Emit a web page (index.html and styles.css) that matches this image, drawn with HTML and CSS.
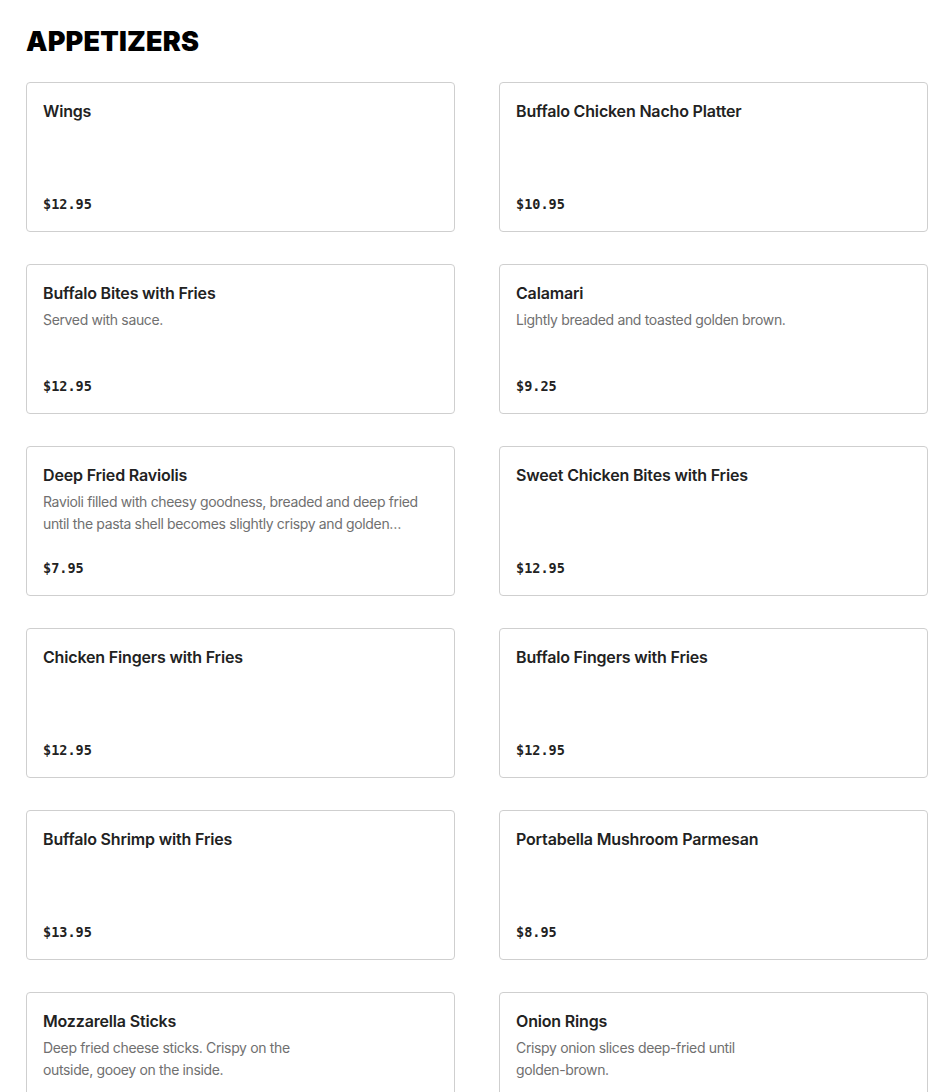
FILE: index.html
```html
<!DOCTYPE html>
<html lang="en">
<head>
    <meta charset="UTF-8">
    <meta name="viewport" content="width=device-width, initial-scale=1.0">
    <title>Menu - Appetizers</title>
    <link rel="stylesheet" href="styles.css">
</head>
<body>
    <section class="menu-section">
        <h2 class="section-title">APPETIZERS</h2>

        <div class="menu-grid">
            <div class="menu-item">
                <h3 class="item-name">Wings</h3>
                <div class="item-price">$12.95</div>
            </div>
            <div class="menu-item">
                <h3 class="item-name">Buffalo Chicken Nacho Platter</h3>
                <div class="item-price">$10.95</div>
            </div>

            <div class="menu-item">
                <h3 class="item-name">Buffalo Bites with Fries</h3>
                <p class="item-desc">Served with sauce.</p>
                <div class="item-price">$12.95</div>
            </div>
            <div class="menu-item">
                <h3 class="item-name">Calamari</h3>
                <p class="item-desc">Lightly breaded and toasted golden brown.</p>
                <div class="item-price">$9.25</div>
            </div>

            <div class="menu-item">
                <h3 class="item-name">Deep Fried Raviolis</h3>
                <p class="item-desc">Ravioli filled with cheesy goodness, breaded and deep fried until the pasta shell becomes slightly crispy and golden brown. Served with marinara sauce.</p>
                <div class="item-price">$7.95</div>
            </div>
            <div class="menu-item">
                <h3 class="item-name">Sweet Chicken Bites with Fries</h3>
                <div class="item-price">$12.95</div>
            </div>

            <div class="menu-item">
                <h3 class="item-name">Chicken Fingers with Fries</h3>
                <div class="item-price">$12.95</div>
            </div>
            <div class="menu-item">
                <h3 class="item-name">Buffalo Fingers with Fries</h3>
                <div class="item-price">$12.95</div>
            </div>

            <div class="menu-item">
                <h3 class="item-name">Buffalo Shrimp with Fries</h3>
                <div class="item-price">$13.95</div>
            </div>
            <div class="menu-item">
                <h3 class="item-name">Portabella Mushroom Parmesan</h3>
                <div class="item-price">$8.95</div>
            </div>

            <div class="menu-item">
                <h3 class="item-name">Mozzarella Sticks</h3>
                <p class="item-desc narrow">Deep fried cheese sticks. Crispy on the outside, gooey on the inside.</p>
                <div class="item-price">$8.95</div>
            </div>
            <div class="menu-item">
                <h3 class="item-name">Onion Rings</h3>
                <p class="item-desc narrow">Crispy onion slices deep-fried until golden-brown.</p>
                <div class="item-price">$7.95</div>
            </div>
        </div>
    </section>
</body>
</html>
```

FILE: styles.css
```css
body {
    font-family: 'Inter', 'Liberation Sans', sans-serif;
    background: #fff;
    color: #1f1f1f;
    margin: 0;
    padding: 26px 22px 40px 26px;
}
.section-title {
    font-family: 'Inter', 'Liberation Sans', sans-serif;
    font-weight: 900;
    font-size: 27px;
    letter-spacing: 0.2px;
    line-height: 32px;
    color: #000;
    margin: 0 0 24px 0;
}
.menu-grid {
    display: grid;
    grid-template-columns: 1fr 1fr;
    column-gap: 44px;
    row-gap: 32px;
}
.menu-item {
    display: flex;
    flex-direction: column;
    height: 150px;
    box-sizing: border-box;
    padding: 16px;
    border: 1px solid #cfcfcf;
    border-radius: 4px;
}
.item-name {
    font-size: 16px;
    font-weight: 600;
    letter-spacing: -0.17px;
    line-height: 24px;
    color: #222;
    margin: 0;
}
.item-desc {
    max-width: 380px;
    font-size: 14px;
    letter-spacing: -0.35px;
    line-height: 22px;
    color: #707070;
    margin: 4px 0 0 0;
    display: -webkit-box;
    -webkit-line-clamp: 2;
    -webkit-box-orient: vertical;
    overflow: hidden;
}
.item-desc.narrow { max-width: 262px; }
.item-price {
    margin-top: auto;
    font-family: 'DejaVu Sans Mono', 'Liberation Mono', monospace;
    font-weight: 700;
    font-size: 13.5px;
    line-height: 22px;
    color: #222;
}
```
